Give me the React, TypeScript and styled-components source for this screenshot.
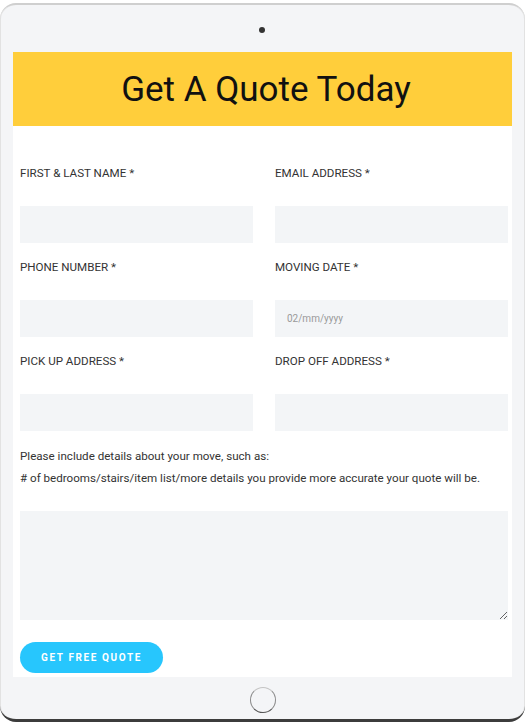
import React from 'react';
import styled, { createGlobalStyle } from 'styled-components';

const GlobalStyle = createGlobalStyle`
    body {
        margin: 0;
        background: #ffffff;
        font-family: Roboto, "Liberation Sans", sans-serif;
    }
`;

const Tablet = styled.div`
    box-sizing: border-box;
    width: 525px;
    height: 719px;
    margin-top: 3px;
    padding: 0 13px;
    display: flex;
    flex-direction: column;
    background: #f4f5f7;
    border-radius: 16px;
    border-top: 2px solid #cfcfcf;
    border-bottom: 3px solid #3c3c3c;
    box-shadow: inset 1px 0 0 #e2e2e2, inset -1px 0 0 #e2e2e2;
`;

const CameraBar = styled.div`
    height: 47px;
    display: flex;
    justify-content: center;
    align-items: center;
`;

const Camera = styled.div`
    width: 6px;
    height: 6px;
    margin: 2px 1px 0 0;
    border-radius: 50%;
    background: #333333;
`;

const Screen = styled.div`
    height: 625px;
    background: #ffffff;
    display: flex;
    flex-direction: column;
`;

const Header = styled.div`
    height: 74px;
    background: #ffce3b;
    display: flex;
    justify-content: center;
    align-items: center;
`;

const Title = styled.h1`
    margin: 0 0 0 7px;
    font-size: 35px;
    font-weight: 400;
    color: #111111;
`;

const Form = styled.form`
    padding: 38px 4px 0 7px;
    display: flex;
    flex-direction: column;
`;

const Grid = styled.div`
    display: grid;
    grid-template-columns: 233px 233px;
    column-gap: 22px;
    row-gap: 15px;
`;

const Field = styled.label`
    display: flex;
    flex-direction: column;
    gap: 24px;
`;

const Label = styled.span`
    font-size: 11.6px;
    line-height: 18px;
    color: #333333;
`;

const Input = styled.input`
    box-sizing: border-box;
    height: 37px;
    width: 100%;
    border: none;
    outline: none;
    background: #f3f5f7;
    padding: 0 12px;
    font-family: Roboto, "Liberation Sans", sans-serif;
    font-size: 10px;
    color: #999999;

    &::placeholder {
        color: #9a9a9a;
    }
`;

const Note = styled.p`
    margin: 14px 0 0;
    font-size: 11.6px;
    line-height: 22px;
    color: #333333;
`;

const TextArea = styled.textarea`
    box-sizing: border-box;
    display: block;
    margin-top: 22px;
    width: 488px;
    height: 109px;
    border: none;
    outline: none;
    background: #f3f5f7;
`;

const Submit = styled.button`
    margin-top: 22px;
    width: 143px;
    height: 31px;
    border: none;
    border-radius: 16px;
    background: #27c6fd;
    color: #ffffff;
    font-family: Roboto, "Liberation Sans", sans-serif;
    font-size: 10px;
    font-weight: 700;
    letter-spacing: 1.6px;
    cursor: pointer;
`;

const HomeBar = styled.div`
    flex: 1;
    display: flex;
    justify-content: center;
    align-items: center;
    padding-top: 4px;
`;

const HomeButton = styled.div`
    width: 24px;
    height: 24px;
    border-radius: 50%;
    border: 1.5px solid #8a8a8a;
    border-top-color: #c4c4c4;
    border-bottom-color: #555555;
`;

const fields = [
    { label: 'FIRST & LAST NAME *', type: 'text' },
    { label: 'EMAIL ADDRESS *', type: 'email' },
    { label: 'PHONE NUMBER *', type: 'tel' },
    { label: 'MOVING DATE *', type: 'text', placeholder: '02/mm/yyyy' },
    { label: 'PICK UP ADDRESS *', type: 'text' },
    { label: 'DROP OFF ADDRESS *', type: 'text' },
];

const App: React.FC = () => {
    return (
        <>
            <GlobalStyle />
            <Tablet>
                <CameraBar>
                    <Camera />
                </CameraBar>
                <Screen>
                    <Header>
                        <Title>Get A Quote Today</Title>
                    </Header>
                    <Form onSubmit={(e) => e.preventDefault()}>
                        <Grid>
                            {fields.map((f) => (
                                <Field key={f.label}>
                                    <Label>{f.label}</Label>
                                    <Input type={f.type} placeholder={f.placeholder} />
                                </Field>
                            ))}
                        </Grid>
                        <Note>
                            Please include details about your move, such as:
                            <br />
                            # of bedrooms/stairs/item list/more details you provide more accurate your quote will be.
                        </Note>
                        <TextArea />
                        <Submit type='submit'>GET FREE QUOTE</Submit>
                    </Form>
                </Screen>
                <HomeBar>
                    <HomeButton />
                </HomeBar>
            </Tablet>
        </>
    );
};

export default App;
